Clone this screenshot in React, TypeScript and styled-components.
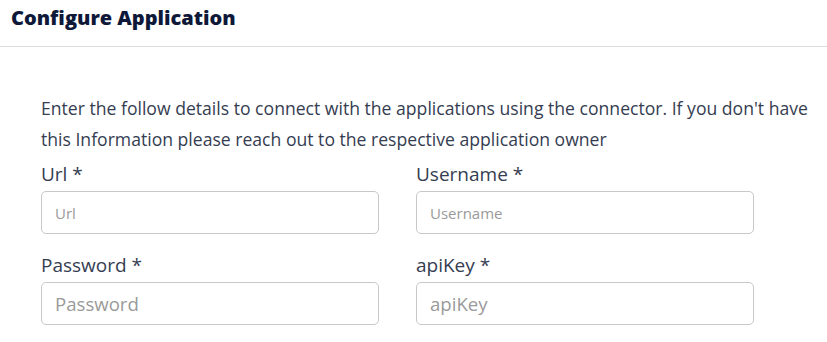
import React from 'react';
import styled, { createGlobalStyle } from 'styled-components';

const GlobalStyle = createGlobalStyle`
  body {
    margin: 0;
    background: #ffffff;
    font-family: 'Open Sans', 'Noto Sans', sans-serif;
  }
`;

const Page = styled.div`
  width: 827px;
  height: 342px;
  background: #fff;
`;

const Header = styled.div`
  height: 46px;
  padding: 0 11px;
  border-bottom: 1px solid #dcdcdc;
  display: flex;
  align-items: flex-start;
`;

const Title = styled.h1`
  margin: 4px 0 0;
  font-size: 20px;
  font-weight: 800;
  line-height: 28px;
  color: #0e1838;
`;

const Body = styled.div`
  padding: 46px 0 0 41px;
`;

const Intro = styled.p`
  margin: 0;
  font-size: 17.6px;
  line-height: 31px;
  color: #353d51;
  width: 776px;
`;

const FieldGrid = styled.div`
  display: grid;
  grid-template-columns: 338px 338px;
  column-gap: 37px;
  row-gap: 17px;
  margin-top: 5px;
`;

const Field = styled.div`
  display: flex;
  flex-direction: column;
`;

const Label = styled.label`
  font-size: 19px;
  line-height: 26px;
  color: #353d51;
  margin-top: 1px;
  margin-bottom: 4px;
`;

const Input = styled.input<{ $small?: boolean }>`
  box-sizing: border-box;
  width: 100%;
  height: 43px;
  border: 1px solid #c8c8c8;
  border-radius: 5px;
  padding: 0 13px;
  font-family: 'Open Sans', 'Noto Sans', sans-serif;
  font-size: ${(p) => (p.$small ? '15px' : '18.6px')};
  color: #333;
  outline: none;
  &::placeholder {
    color: #9a9a9a;
  }
`;

const fields = [
  { label: 'Url', small: true },
  { label: 'Username', small: true },
  { label: 'Password', small: false },
  { label: 'apiKey', small: false },
];

const App = () => (
  <Page>
    <GlobalStyle />
    <Header>
      <Title>Configure Application</Title>
    </Header>
    <Body>
      <Intro>
        Enter the follow details to connect with the applications using the connector. If you
        don't have this Information please reach out to the respective application owner
      </Intro>
      <FieldGrid>
        {fields.map((f) => (
          <Field key={f.label}>
            <Label>{f.label} *</Label>
            <Input $small={f.small} placeholder={f.label} type={f.label === 'Password' ? 'password' : 'text'} />
          </Field>
        ))}
      </FieldGrid>
    </Body>
  </Page>
);

export default App;
